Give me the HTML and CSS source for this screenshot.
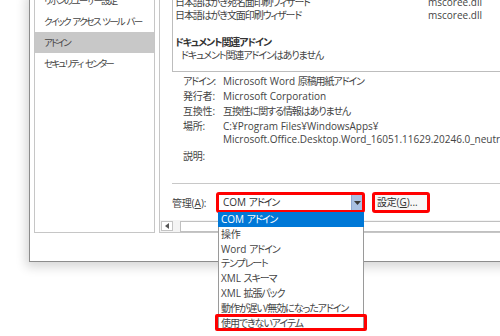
FILE: index.html
```html
<!DOCTYPE html>
<html lang="ja">
<head>
<meta charset="utf-8">
<title>Word のオプション - アドイン</title>
<link rel="stylesheet" href="styles.css">
</head>
<body>
<div class="stage">
  <div class="window">
    <nav class="nav">
      <div class="nav-item">リボンのユーザー設定</div>
      <div class="nav-item">クイック アクセス ツール バー</div>
      <div class="nav-item is-selected">アドイン</div>
      <div class="nav-item">セキュリティ センター</div>
    </nav>
    <section class="panel">
      <div class="panel-body">
        <div class="addin-list">
          <div class="addin-row"><span class="addin-name">日本語はがき宛名面印刷ウィザード</span><span class="addin-file en">mscoree.dll</span></div>
          <div class="addin-row"><span class="addin-name">日本語はがき文面印刷ウィザード</span><span class="addin-file en">mscoree.dll</span></div>
          <div class="group-title">ドキュメント関連アドイン</div>
          <div class="group-empty">ドキュメント関連アドインはありません</div>
        </div>
        <dl class="details">
          <dt>アドイン:</dt><dd><span class="en">Microsoft Word </span>原稿用紙アドイン</dd>
          <dt class="kanji">発行者:</dt><dd class="en">Microsoft Corporation</dd>
          <dt class="kanji">互換性:</dt><dd>互換性に関する情報はありません</dd>
          <dt class="kanji is-multi">場所:</dt><dd class="is-multi en">C:¥Program Files¥WindowsApps¥<br>Microsoft.Office.Desktop.Word_16051.11629.20246.0_neutral__8wekyb3d8bbwe</dd>
          <dt class="kanji">説明:</dt><dd></dd>
        </dl>
        <hr class="divider">
        <div class="manage">
          <span class="manage-label kanji">管理<span class="en">(<u>A</u>):</span></span>
          <div class="combo-frame">
            <div class="combo">
              <span class="combo-value"><span class="en">COM </span>アドイン</span>
              <span class="combo-btn"><svg width="7" height="4" viewBox="0 0 7 4"><path d="M0 0h7L3.5 4z" fill="#3a3a3a"/></svg></span>
            </div>
            <ul class="dropdown">
              <li class="dropdown-item is-active"><span class="en">COM </span>アドイン</li>
              <li class="dropdown-item kanji">操作</li>
              <li class="dropdown-item"><span class="en">Word </span>アドイン</li>
              <li class="dropdown-item">テンプレート</li>
              <li class="dropdown-item"><span class="en">XML </span>スキーマ</li>
              <li class="dropdown-item"><span class="en">XML </span>拡張パック</li>
              <li class="dropdown-item">動作が遅い/無効になったアドイン</li>
              <li class="dropdown-item is-marked">使用できないアイテム</li>
            </ul>
          </div>
          <div class="btn-frame"><button class="btn kanji">設定<span class="en">(<u>G</u>)...</span></button></div>
        </div>
      </div>
      <div class="hscroll">
        <span class="hscroll-arrow"><svg width="4" height="6" viewBox="0 0 4 6"><path d="M4 0v6L0 3z" fill="#555"/></svg></span>
        <span class="hscroll-thumb"></span>
      </div>
    </section>
  </div>
</div>
</body>
</html>
```

FILE: styles.css
```css
* { box-sizing: border-box; }

html, body {
  margin: 0;
  padding: 0;
  background: #ffffff;
}

body {
  font-family: "Open Sans", "Noto Sans CJK JP", sans-serif;
  font-size: 10px;
  color: #444444;
  font-feature-settings: "palt";
  letter-spacing: -1.1px;
}

.en {
  letter-spacing: 0;
}

.kanji {
  letter-spacing: -0.2px;
}

.stage {
  width: 500px;
  height: 336px;
  overflow: hidden;
  background: #ffffff;
}

.window {
  margin-left: 29px;
  margin-top: -10px;
  width: 640px;
  height: 272px;
  background: #ffffff;
  border-left: 1px solid #8c8c8c;
  border-bottom: 1px solid #8c8c8c;
  box-shadow: -3px 5px 10px rgba(0, 0, 0, 0.16);
  padding-left: 4px;
  display: flex;
  gap: 4px;
}

/* left navigation */
.nav {
  width: 121px;
  height: 243px;
  border: 1px solid #c6c6c6;
  border-top: none;
  flex: none;
  overflow: hidden;
}

.nav-item {
  height: 21px;
  line-height: 21px;
  padding-left: 9px;
  white-space: nowrap;
  color: #444444;
  font-size: 9.5px;
  letter-spacing: -1.8px;
  word-spacing: 2px;
}

.nav-item.is-selected {
  background: #c8c8c8;
}

/* right panel */
.panel {
  flex: 1;
  height: 243px;
  border-left: 1px solid #c6c6c6;
  border-bottom: 1px solid #c6c6c6;
  display: flex;
  flex-direction: column;
}

.panel-body {
  flex: 1;
  padding-left: 12px;
  position: relative;
}

.addin-list {
  border: 1px solid #bdbdbd;
  border-top: none;
  padding: 6px 0 9px 2px;
  height: 82px;
  overflow: hidden;
}

.addin-row {
  display: flex;
  height: 13px;
  line-height: 13px;
  white-space: nowrap;
}

.addin-name {
  width: 253px;
  flex: none;
}

.group-title {
  margin-top: 14px;
  height: 13px;
  line-height: 13px;
  font-weight: 700;
  color: #333333;
}

.group-empty {
  height: 13px;
  line-height: 13px;
  padding-left: 6px;
}

.details {
  margin: 2px 0 0 11px;
  display: grid;
  grid-template-columns: 40px 1fr;
  grid-auto-rows: 15px;
  line-height: 15px;
}

.details dt,
.details dd {
  margin: 0;
  white-space: nowrap;
}

.details .is-multi {
  line-height: 13px;
  grid-row: span 2;
  height: 26px;
  padding-top: 1px;
}

.divider {
  margin: 19px 0 0 0;
  border: none;
  border-top: 1px solid #c8c8c8;
  height: 0;
}

.manage {
  margin-top: 8px;
  display: flex;
  align-items: center;
  height: 21px;
}

.manage-label {
  width: 44px;
  flex: none;
  white-space: nowrap;
}

.combo-frame {
  position: relative;
  width: 149px;
  height: 21px;
  border: 3px solid #ff0000;
  border-radius: 3px;
  flex: none;
  z-index: 2;
}

.combo {
  height: 15px;
  display: flex;
  align-items: center;
  background: #ffffff;
  padding-left: 4px;
}

.combo-value {
  flex: 1;
  line-height: 15px;
  color: #333333;
  white-space: nowrap;
}

.combo-btn {
  width: 11px;
  height: 15px;
  background: #a9c0e2;
  border-left: 1px solid #8ea8d2;
  display: flex;
  align-items: center;
  justify-content: center;
}

.dropdown {
  position: absolute;
  left: -1px;
  top: calc(100% + 2px);
  width: 146px;
  margin: 0;
  padding: 0;
  list-style: none;
  background: #ffffff;
  border: 1px solid #9a9a9a;
  border-top: none;
}

.dropdown-item {
  height: 14.8px;
  line-height: 14.8px;
  padding-left: 2px;
  white-space: nowrap;
  color: #444444;
  position: relative;
}

.dropdown-item.is-active {
  background: #0078d7;
  color: #ffffff;
  margin: 0 -1px;
  padding-left: 3px;
}

.dropdown-item.is-marked::after {
  content: "";
  position: absolute;
  left: -4px;
  right: -4px;
  top: -2px;
  bottom: -1px;
  border: 3px solid #ff0000;
  border-radius: 2px;
}

.btn-frame {
  margin-left: 7px;
  width: 58px;
  height: 21px;
  border: 3px solid #ff0000;
  border-radius: 3px;
  flex: none;
}

.btn {
  width: 100%;
  height: 15px;
  padding: 0 0 0 2px;
  margin: 0;
  border: none;
  background: #f7f7f7;
  font: inherit;
  color: #333333;
  line-height: 15px;
  text-align: left;
  white-space: nowrap;
}

/* horizontal scrollbar */
.hscroll {
  height: 12px;
  flex: none;
  display: flex;
  align-items: flex-start;
  background: #f4f4f4;
  padding: 1px 0 0 1px;
}

.hscroll-arrow {
  width: 12px;
  height: 10px;
  border: 1px solid #c4c4c4;
  background: #ffffff;
  display: flex;
  align-items: center;
  justify-content: center;
  flex: none;
}

.hscroll-thumb {
  margin-left: 7px;
  flex: 1;
  height: 11px;
  border: 1px solid #c0c0c0;
  border-right: none;
  background: #ffffff;
}
```
